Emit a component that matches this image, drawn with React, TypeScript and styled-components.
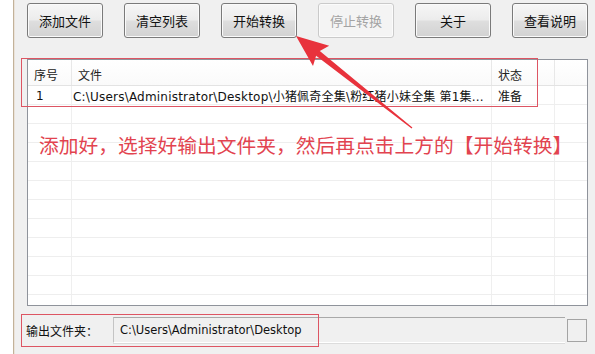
import React from "react";
import styled, { createGlobalStyle } from "styled-components";

const Global = createGlobalStyle`
  html, body { margin: 0; padding: 0; background: #ffffff; }
  body { font-family: "Noto Sans CJK SC", "Noto Sans", sans-serif; }
  * { box-sizing: border-box; }
`;

const Root = styled.div`
  position: relative;
  width: 595px;
  height: 354px;
  overflow: hidden;
  background: #ffffff;
`;

const Window = styled.div`
  margin-left: 13px;
  height: 354px;
  background: #f0f0f0;
  border-left: 1px solid #c2b29a;
  box-shadow: inset 1px 0 0 #ebe3da;
  display: flex;
  flex-direction: column;
`;

const Toolbar = styled.div`
  display: flex;
  gap: 21px;
  padding: 3px 0 0 13px;
`;

const Button = styled.button<{ $disabled?: boolean }>`
  width: 76px;
  height: 35px;
  padding: 0;
  border-radius: 3px;
  font-family: "Noto Sans CJK SC", sans-serif;
  font-size: 13px;
  color: ${(p) => (p.$disabled ? "#a3a3a3" : "#111111")};
  border: 1px solid ${(p) => (p.$disabled ? "#cacaca" : "#7a7a7a")};
  background: ${(p) =>
    p.$disabled
      ? "#f4f4f4"
      : "linear-gradient(#f6f6f6 0%, #ececec 48%, #dedede 52%, #d2d2d2 100%)"};
  box-shadow: inset 0 0 0 1px ${(p) => (p.$disabled ? "#fbfbfb" : "#fafafa")};
`;

const List = styled.div`
  margin: 21px 0 0 13px;
  width: 561px;
  height: 247px;
  background: #ffffff;
  border: 1px solid #8f939b;
  overflow: hidden;
`;

const cols = "44px 420px 63px 32px";

const HeaderRow = styled.div`
  display: grid;
  grid-template-columns: ${cols};
  height: 26px;
  background: linear-gradient(#ffffff, #fafafa);
  border-bottom: 1px solid #e3e3e3;
`;

const HeaderCell = styled.div`
  display: flex;
  align-items: flex-end;
  padding: 0 0 2px 6px;
  font-size: 12px;
  color: #222;
  border-right: 1px solid #e8e8e8;
  &:last-child { border-right: none; }
`;

const Row = styled.div`
  display: grid;
  grid-template-columns: ${cols};
  height: 19px;
  border-bottom: 1px solid #eeeeee;
`;

const Cell = styled.div<{ $pad?: number }>`
  display: flex;
  align-items: center;
  padding: 1px 0 0 ${(p) => p.$pad ?? 6}px;
  font-family: "DejaVu Sans", "Noto Sans CJK SC", sans-serif;
  font-size: 12px;
  letter-spacing: 0.2px;
  color: #111;
  white-space: nowrap;
  overflow: hidden;
  border-right: 1px solid #efefef;
  &:last-child { border-right: none; }
`;

const CjkCell = styled(Cell)`
  font-family: "Noto Sans CJK SC", sans-serif;
  letter-spacing: 0;
`;

const BottomRow = styled.div`
  display: flex;
  align-items: center;
  margin-top: 11px;
  padding-left: 12px;
  height: 26px;
`;

const Label = styled.div`
  width: 87px;
  font-size: 12px;
  color: #111;
`;

const PathField = styled.div`
  width: 452px;
  height: 26px;
  display: flex;
  align-items: center;
  padding-left: 6px;
  font-family: "DejaVu Sans", sans-serif;
  font-size: 11.5px;
  color: #111;
  border-top: 1px solid #a9a9a9;
  border-left: 1px solid #c4c4c4;
  border-bottom: 1px solid #ffffff;
  box-shadow: 0 1px 0 #dcdcdc;
`;

const Browse = styled.div`
  margin-left: 2px;
  width: 20px;
  height: 23px;
  border: 1px solid #a4a4a4;
  background: #f0f0f0;
`;

const RedBox = styled.div<{ $x: number; $y: number; $w: number; $h: number }>`
  position: absolute;
  left: ${(p) => p.$x}px;
  top: ${(p) => p.$y}px;
  width: ${(p) => p.$w}px;
  height: ${(p) => p.$h}px;
  border: 1.5px solid #dd5563;
  pointer-events: none;
`;

const Note = styled.div`
  position: absolute;
  left: 39px;
  top: 132px;
  font-family: "Noto Sans CJK SC", sans-serif;
  font-size: 19.75px;
  line-height: 26px;
  color: #e2434f;
  white-space: nowrap;
  pointer-events: none;
`;

const Arrow = styled.svg`
  position: absolute;
  left: 0;
  top: 0;
  pointer-events: none;
`;

const buttons = [
  { t: "添加文件" },
  { t: "清空列表" },
  { t: "开始转换" },
  { t: "停止转换", d: true },
  { t: "关于" },
  { t: "查看说明" },
];

export default function App() {
  const rows = Array.from({ length: 12 });
  const tip = [296, 36];
  const tail = [412, 128];
  const dx = tail[0] - tip[0];
  const dy = tail[1] - tip[1];
  const len = Math.hypot(dx, dy);
  const ux = dx / len;
  const uy = dy / len;
  const nx = -uy;
  const ny = ux;
  const headL = 32;
  const headW = 13;
  const shaftW = 3;
  const bx = tip[0] + ux * headL;
  const by = tip[1] + uy * headL;
  const pts = [
    [tip[0], tip[1]],
    [bx + nx * headW, by + ny * headW],
    [bx + nx * shaftW - ux * 4, by + ny * shaftW - uy * 4],
    [tail[0] + nx * 0.6, tail[1] + ny * 0.6],
    [tail[0] - nx * 0.6, tail[1] - ny * 0.6],
    [bx - nx * shaftW - ux * 4, by - ny * shaftW - uy * 4],
    [bx - nx * headW, by - ny * headW],
  ]
    .map((p) => p.map((v) => v.toFixed(1)).join(","))
    .join(" ");

  return (
    <Root>
      <Global />
      <Window>
        <Toolbar>
          {buttons.map((b) => (
            <Button key={b.t} $disabled={b.d}>
              {b.t}
            </Button>
          ))}
        </Toolbar>
        <List>
          <HeaderRow>
            <HeaderCell>序号</HeaderCell>
            <HeaderCell>文件</HeaderCell>
            <HeaderCell>状态</HeaderCell>
            <HeaderCell />
          </HeaderRow>
          {rows.map((_, i) => (
            <Row key={i}>
              {i === 0 ? (
                <>
                  <Cell $pad={8}>1</Cell>
                  <Cell $pad={1}>
                    C:\Users\Administrator\Desktop\小猪佩奇全集\粉红猪小妹全集 第1集...
                  </Cell>
                  <CjkCell>准备</CjkCell>
                  <Cell />
                </>
              ) : (
                <>
                  <Cell />
                  <Cell />
                  <Cell />
                  <Cell />
                </>
              )}
            </Row>
          ))}
        </List>
        <BottomRow>
          <Label>输出文件夹：</Label>
          <PathField>C:\Users\Administrator\Desktop</PathField>
          <Browse />
        </BottomRow>
      </Window>
      <RedBox $x={21} $y={58} $w={517} $h={49} />
      <RedBox $x={21} $y={314} $w={298} $h={33} />
      <Note>添加好，选择好输出文件夹，然后再点击上方的【开始转换】</Note>
      <Arrow width="595" height="354" viewBox="0 0 595 354">
        <polygon points={pts} fill="#e8323c" />
      </Arrow>
    </Root>
  );
}
